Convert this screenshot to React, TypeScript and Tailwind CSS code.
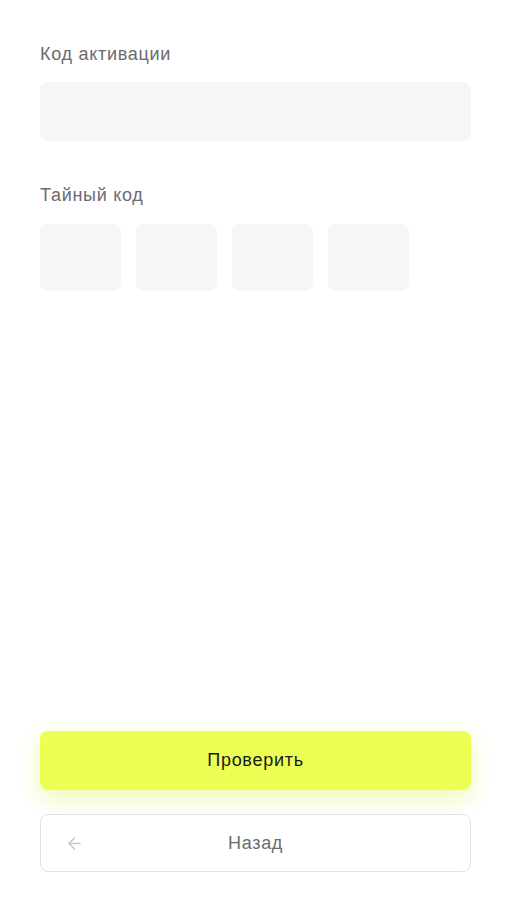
import React from "react";

export default function App() {
  return (
    <div
      className="min-h-[900px] w-full bg-white flex flex-col pl-10 pr-9 pt-[42px] pb-7"
      style={{ fontFamily: '"Liberation Sans", Arial, sans-serif' }}
    >
      {/* Activation code */}
      <label className="text-[18px] leading-6 tracking-[0.04em] text-[#6b6b70]">Код активации</label>
      <div className="mt-4 h-[59px] w-full rounded-lg bg-[#f5f6f7]" />

      {/* Secret code */}
      <label className="mt-[42px] text-[18px] leading-6 tracking-[0.04em] text-[#6b6b70]">Тайный код</label>
      <div className="mt-[17px] flex gap-[15px]">
        {[0, 1, 2, 3].map((i) => (
          <div key={i} className="h-[67px] w-[81px] rounded-lg bg-[#f5f6f7]" />
        ))}
      </div>

      <div className="flex-1" />

      {/* Actions */}
      <button className="h-[59px] w-full rounded-lg bg-[#ebff55] text-[18px] tracking-[0.04em] text-[#1a1a1a] shadow-[0_8px_22px_rgba(220,240,60,0.4)]">
        Проверить
      </button>
      <button className="mt-6 relative h-[58px] w-full rounded-lg border border-[#dfe1e6] bg-white text-[18px] tracking-[0.04em] text-[#6b6b70] flex items-center justify-center">
        <svg
          className="absolute left-[24px]"
          width="19"
          height="19"
          viewBox="0 0 24 24"
          fill="none"
          stroke="#c4c6cc"
          strokeWidth="1.8"
          strokeLinecap="round"
          strokeLinejoin="round"
        >
          <path d="M19 12H5" />
          <path d="M12 19l-7-7 7-7" />
        </svg>
        Назад
      </button>
    </div>
  );
}
